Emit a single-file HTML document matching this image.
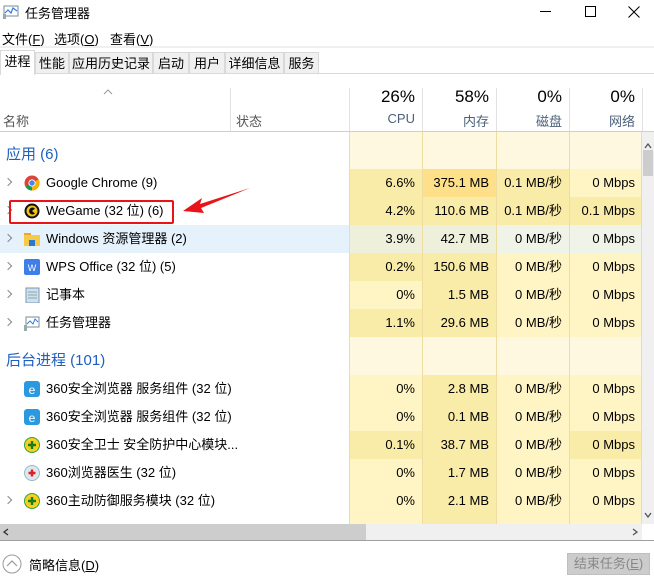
<!DOCTYPE html>
<html><head><meta charset="utf-8"><style>
*{margin:0;padding:0;box-sizing:border-box}
body{width:654px;height:580px;background:#fff;font-family:"Liberation Sans","Noto Sans CJK SC",sans-serif;font-size:13px;color:#000;position:relative;overflow:hidden}
.a{position:absolute}
.row{position:absolute;left:0;width:642px;height:28px}
.c{position:absolute;top:0;height:100%;text-align:right;padding-right:7px;line-height:28px;font-size:13px}
.n{position:absolute;left:46px;top:0;line-height:28px;white-space:nowrap}
.chev{position:absolute;left:5px;top:10px;width:6px;height:6px;border-right:1.2px solid #888;border-top:1.2px solid #888;transform:rotate(45deg)}
.ic{position:absolute;left:24px;top:6px;width:16px;height:16px}
.tab{position:absolute;top:52px;height:22px;line-height:21px;background:#f0f0f0;border:1px solid #d9d9d9;text-align:center;font-size:13px}
.vl{position:absolute;width:1px;background:#e2e2e2}
</style></head><body>
<svg class="a" style="left:3px;top:5px" width="16" height="14"><rect x="1" y="1" width="14" height="10" fill="#fff" stroke="#7a8a99"/><polyline points="2,8 5,5 8,8 10,3 14,6" fill="none" stroke="#3a7bd5" stroke-width="1.2"/><rect x="0" y="9" width="3" height="5" fill="#9aa"/></svg>
<div class="a" style="left:25px;top:3px;font-size:13px">任务管理器</div>
<div class="a" style="left:540px;top:11px;width:11px;height:1px;background:#000"></div>
<div class="a" style="left:585px;top:6px;width:11px;height:11px;border:1px solid #000"></div>
<svg class="a" style="left:628px;top:6px" width="12" height="12"><path d="M0.5 0.5L11.5 11.5M11.5 0.5L0.5 11.5" stroke="#000" stroke-width="1"/></svg>
<div class="a" style="left:2px;top:29px">文件(<u>F</u>)</div>
<div class="a" style="left:54px;top:29px">选项(<u>O</u>)</div>
<div class="a" style="left:110px;top:29px">查看(<u>V</u>)</div>
<div class="a" style="left:0;top:46px;width:654px;height:2px;background:#f0f0f0"></div>
<div class="a" style="left:0;top:73px;width:654px;height:1px;background:#d9d9d9"></div>
<div class="tab" style="left:0;top:50px;width:35px;height:25px;background:#fff;border-bottom:none">进程</div>
<div class="tab" style="left:35px;width:34px">性能</div>
<div class="tab" style="left:69px;width:84px">应用历史记录</div>
<div class="tab" style="left:153px;width:36px">启动</div>
<div class="tab" style="left:189px;width:36px">用户</div>
<div class="tab" style="left:225px;width:59px">详细信息</div>
<div class="tab" style="left:284px;width:35px">服务</div>
<svg class="a" style="left:103px;top:89px" width="10" height="6"><polyline points="1,5 5,1 9,5" fill="none" stroke="#999"/></svg>
<div class="a" style="left:3px;top:111px;color:#555">名称</div>
<div class="a" style="left:236px;top:111px;color:#555">状态</div>
<div class="vl" style="left:230px;top:88px;height:43px"></div>
<div class="vl" style="left:349px;top:88px;height:43px"></div>
<div class="vl" style="left:422px;top:88px;height:43px"></div>
<div class="vl" style="left:496px;top:88px;height:43px"></div>
<div class="vl" style="left:569px;top:88px;height:43px"></div>
<div class="vl" style="left:642px;top:88px;height:43px"></div>
<div class="a" style="left:349px;width:66px;top:87px;text-align:right;font-size:17px">26%</div>
<div class="a" style="left:422px;width:67px;top:87px;text-align:right;font-size:17px">58%</div>
<div class="a" style="left:496px;width:66px;top:87px;text-align:right;font-size:17px">0%</div>
<div class="a" style="left:569px;width:66px;top:87px;text-align:right;font-size:17px">0%</div>
<div class="a" style="left:349px;width:66px;top:111px;text-align:right;color:#4c607a">CPU</div>
<div class="a" style="left:422px;width:67px;top:111px;text-align:right;color:#4c607a">内存</div>
<div class="a" style="left:496px;width:66px;top:111px;text-align:right;color:#4c607a">磁盘</div>
<div class="a" style="left:569px;width:66px;top:111px;text-align:right;color:#4c607a">网络</div>
<div class="a" style="left:0;top:131px;width:654px;height:1px;background:#cfcfcf"></div>
<div class="a" style="left:349px;top:132px;width:293px;height:392px;background:#fff8e1"></div>
<div class="a" style="left:6px;top:143px;font-size:15px;color:#1f5fbf">应用 (6)</div>
<div class="a" style="left:6px;top:349px;font-size:15px;color:#1f5fbf">后台进程 (101)</div>

<div class="row" style="top:169px"><div class="chev"></div>
<svg class="ic" viewBox="0 0 16 16"><circle cx="8" cy="8" r="7.5" fill="#db4437"/><path d="M8 8 L1.5 11.7 A7.5 7.5 0 0 0 8 15.5Z" fill="#0f9d58"/><path d="M8 8 L14.5 4.3 A7.5 7.5 0 0 1 8 15.5Z" fill="#f4b400"/><circle cx="8" cy="8" r="3.6" fill="#fff"/><circle cx="8" cy="8" r="2.7" fill="#4285f4"/></svg>
<div class="n">Google Chrome (9)</div>
<div class="c" style="left:349px;width:73px;background:#f9eca8">6.6%</div><div class="c" style="left:422px;width:74px;background:#ffe08a">375.1 MB</div><div class="c" style="left:496px;width:73px;background:#f9eca8">0.1 MB/秒</div><div class="c" style="left:569px;width:73px;background:#fff4c4">0 Mbps</div></div>

<div class="row" style="top:197px"><div class="chev"></div>
<svg class="ic" viewBox="0 0 16 16"><circle cx="8" cy="8" r="7.5" fill="#111"/><circle cx="8" cy="8" r="5.5" fill="#f3c318"/><path d="M11 5.5 A3.5 3.5 0 1 0 11 10.5 L8 8Z" fill="#111"/></svg>
<div class="n">WeGame (32 位) (6)</div>
<div class="c" style="left:349px;width:73px;background:#f9eca8">4.2%</div><div class="c" style="left:422px;width:74px;background:#f9eca8">110.6 MB</div><div class="c" style="left:496px;width:73px;background:#f9eca8">0.1 MB/秒</div><div class="c" style="left:569px;width:73px;background:#f9eca8">0.1 Mbps</div></div>

<div class="row" style="top:225px;background:#e5f1fb"><div class="chev"></div>
<svg class="ic" viewBox="0 0 16 16"><rect x="0" y="2" width="7" height="3" fill="#e8a92b"/><rect x="0" y="4" width="16" height="11" fill="#f7c948"/><rect x="5" y="9" width="6" height="6" fill="#2b78d0"/></svg>
<div class="n">Windows 资源管理器 (2)</div>
<div class="c" style="left:349px;width:73px;background:#eef0dc">3.9%</div><div class="c" style="left:422px;width:74px;background:#eef0dc">42.7 MB</div><div class="c" style="left:496px;width:73px;background:#f0f3e8">0 MB/秒</div><div class="c" style="left:569px;width:73px;background:#f0f3e8">0 Mbps</div></div>

<div class="row" style="top:253px"><div class="chev"></div>
<svg class="ic" viewBox="0 0 16 16"><rect x="0" y="0" width="16" height="16" rx="2" fill="#3f7ee8"/><text x="8" y="12" font-size="9" fill="#fff" text-anchor="middle" font-family="Liberation Sans">W</text></svg>
<div class="n">WPS Office (32 位) (5)</div>
<div class="c" style="left:349px;width:73px;background:#f9eca8">0.2%</div><div class="c" style="left:422px;width:74px;background:#f9eca8">150.6 MB</div><div class="c" style="left:496px;width:73px;background:#fff4c4">0 MB/秒</div><div class="c" style="left:569px;width:73px;background:#fff4c4">0 Mbps</div></div>

<div class="row" style="top:281px"><div class="chev"></div>
<svg class="ic" viewBox="0 0 16 16"><rect x="2" y="1" width="13" height="15" fill="#cfe0ef" stroke="#7a97b0"/><line x1="4" y1="5" x2="13" y2="5" stroke="#8aa"/><line x1="4" y1="8" x2="13" y2="8" stroke="#8aa"/><line x1="4" y1="11" x2="13" y2="11" stroke="#8aa"/></svg>
<div class="n">记事本</div>
<div class="c" style="left:349px;width:73px;background:#fff4c4">0%</div><div class="c" style="left:422px;width:74px;background:#f9eca8">1.5 MB</div><div class="c" style="left:496px;width:73px;background:#fff4c4">0 MB/秒</div><div class="c" style="left:569px;width:73px;background:#fff4c4">0 Mbps</div></div>

<div class="row" style="top:309px"><div class="chev"></div>
<svg class="ic" viewBox="0 0 16 16"><rect x="2" y="2" width="13" height="10" fill="#fff" stroke="#7a8a99"/><polyline points="3,9 6,6 9,9 11,4 14,7" fill="none" stroke="#3a7bd5"/><rect x="0" y="10" width="3" height="6" fill="#9aa"/></svg>
<div class="n">任务管理器</div>
<div class="c" style="left:349px;width:73px;background:#f9eca8">1.1%</div><div class="c" style="left:422px;width:74px;background:#f9eca8">29.6 MB</div><div class="c" style="left:496px;width:73px;background:#fff4c4">0 MB/秒</div><div class="c" style="left:569px;width:73px;background:#fff4c4">0 Mbps</div></div>

<div class="row" style="top:375px">
<svg class="ic" viewBox="0 0 16 16"><rect x="0" y="0" width="16" height="16" rx="3" fill="#2a9ae0"/><text x="8" y="13" font-size="12" fill="#fff" text-anchor="middle" font-family="Liberation Sans">e</text></svg>
<div class="n">360安全浏览器 服务组件 (32 位)</div>
<div class="c" style="left:349px;width:73px;background:#fff4c4">0%</div><div class="c" style="left:422px;width:74px;background:#f9eca8">2.8 MB</div><div class="c" style="left:496px;width:73px;background:#fff4c4">0 MB/秒</div><div class="c" style="left:569px;width:73px;background:#fff4c4">0 Mbps</div></div>

<div class="row" style="top:403px">
<svg class="ic" viewBox="0 0 16 16"><rect x="0" y="0" width="16" height="16" rx="3" fill="#2a9ae0"/><text x="8" y="13" font-size="12" fill="#fff" text-anchor="middle" font-family="Liberation Sans">e</text></svg>
<div class="n">360安全浏览器 服务组件 (32 位)</div>
<div class="c" style="left:349px;width:73px;background:#fff4c4">0%</div><div class="c" style="left:422px;width:74px;background:#f9eca8">0.1 MB</div><div class="c" style="left:496px;width:73px;background:#fff4c4">0 MB/秒</div><div class="c" style="left:569px;width:73px;background:#fff4c4">0 Mbps</div></div>

<div class="row" style="top:431px">
<svg class="ic" viewBox="0 0 16 16"><circle cx="8" cy="8" r="7.5" fill="#f2d21c" stroke="#3c9a3c"/><path d="M8 4v8M4 8h8" stroke="#1c7a1c" stroke-width="2.4"/></svg>
<div class="n">360安全卫士 安全防护中心模块...</div>
<div class="c" style="left:349px;width:73px;background:#f9eca8">0.1%</div><div class="c" style="left:422px;width:74px;background:#f9eca8">38.7 MB</div><div class="c" style="left:496px;width:73px;background:#fff4c4">0 MB/秒</div><div class="c" style="left:569px;width:73px;background:#f9eca8">0 Mbps</div></div>

<div class="row" style="top:459px">
<svg class="ic" viewBox="0 0 16 16"><circle cx="8" cy="8" r="7.5" fill="#dfe8f2" stroke="#9bb"/><path d="M8 4.5v7M4.5 8h7" stroke="#d22" stroke-width="2.4"/></svg>
<div class="n">360浏览器医生 (32 位)</div>
<div class="c" style="left:349px;width:73px;background:#fff4c4">0%</div><div class="c" style="left:422px;width:74px;background:#f9eca8">1.7 MB</div><div class="c" style="left:496px;width:73px;background:#fff4c4">0 MB/秒</div><div class="c" style="left:569px;width:73px;background:#fff4c4">0 Mbps</div></div>

<div class="row" style="top:487px"><div class="chev"></div>
<svg class="ic" viewBox="0 0 16 16"><circle cx="8" cy="8" r="7.5" fill="#f2d21c" stroke="#3c9a3c"/><path d="M8 4v8M4 8h8" stroke="#1c7a1c" stroke-width="2.4"/></svg>
<div class="n">360主动防御服务模块 (32 位)</div>
<div class="c" style="left:349px;width:73px;background:#fff4c4">0%</div><div class="c" style="left:422px;width:74px;background:#f9eca8">2.1 MB</div><div class="c" style="left:496px;width:73px;background:#fff4c4">0 MB/秒</div><div class="c" style="left:569px;width:73px;background:#fff4c4">0 Mbps</div></div>
<div class="a" style="left:349px;top:515px;width:73px;height:9px;background:#fff4c4"></div>
<div class="a" style="left:422px;top:515px;width:74px;height:9px;background:#f9eca8"></div>
<div class="a" style="left:496px;top:515px;width:146px;height:9px;background:#fff4c4"></div>
<div class="vl" style="left:349px;top:132px;height:392px;background:#efdca0"></div>
<div class="vl" style="left:422px;top:132px;height:392px;background:#efdca0"></div>
<div class="vl" style="left:496px;top:132px;height:392px;background:#efdca0"></div>
<div class="vl" style="left:569px;top:132px;height:392px;background:#efdca0"></div>
<div class="vl" style="left:641px;top:132px;height:392px;background:#efdca0"></div>
<div class="a" style="left:642px;top:132px;width:12px;height:392px;background:#f0f0f0"></div>
<svg class="a" style="left:644px;top:143px" width="8" height="6"><polyline points="1,5 4,1 7,5" fill="none" stroke="#555" stroke-width="1.3"/></svg>
<div class="a" style="left:643px;top:150px;width:10px;height:26px;background:#cdcdcd"></div>
<svg class="a" style="left:644px;top:512px" width="8" height="6"><polyline points="1,1 4,5 7,1" fill="none" stroke="#555" stroke-width="1.3"/></svg>
<div class="a" style="left:0;top:524px;width:642px;height:16px;background:#f0f0f0"></div>
<div class="a" style="left:0;top:524px;width:366px;height:16px;background:#cdcdcd"></div>
<svg class="a" style="left:3px;top:528px" width="6" height="8"><polyline points="5,1 1,4 5,7" fill="none" stroke="#333" stroke-width="1.3"/></svg>
<svg class="a" style="left:632px;top:528px" width="6" height="8"><polyline points="1,1 5,4 1,7" fill="none" stroke="#555" stroke-width="1.3"/></svg>
<div class="a" style="left:0;top:540px;width:654px;height:1px;background:#a0a0a0"></div>
<svg class="a" style="left:2px;top:554px" width="20" height="20"><circle cx="10" cy="10" r="9" fill="none" stroke="#999"/><polyline points="5,12 10,7 15,12" fill="none" stroke="#999" stroke-width="1.2"/></svg>
<div class="a" style="left:29px;top:555px">简略信息(<u>D</u>)</div>
<div class="a" style="left:567px;top:553px;width:83px;height:22px;background:#ccc;border:1px solid #bfbfbf;color:#888;text-align:center;line-height:20px">结束任务(<u>E</u>)</div>
<div class="a" style="left:9px;top:200px;width:165px;height:24px;border:2px solid #e8141a;border-radius:2px"></div>
<svg class="a" style="left:180px;top:186px" width="72" height="30"><polygon points="3,25 22,12 20,18 70,2 21,22 24,27" fill="#e8141a"/></svg>
</body></html>
